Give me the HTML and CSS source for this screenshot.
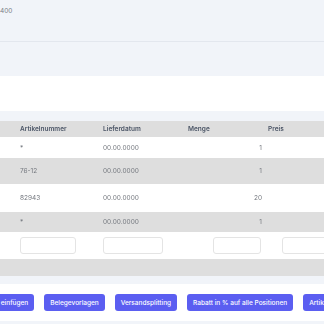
FILE: index.html
```html
<!DOCTYPE html>
<html lang="de">
<head>
  <meta charset="UTF-8">
  <title>Beleg</title>
  <link rel="stylesheet" href="styles.css">
</head>
<body>

  <div class="head-box">
    <span class="phone">400</span>
  </div>
  <div class="sub-box"></div>
  <div class="blank"></div>

  <div class="positions">
    <div class="row head">
      <div class="cell pre"></div>
      <div class="cell nr">Artikelnummer</div>
      <div class="cell date">Lieferdatum</div>
      <div class="cell qty">Menge</div>
      <div class="cell price">Preis</div>
    </div>

    <div class="row r1">
      <div class="cell pre"></div>
      <div class="cell nr">*</div>
      <div class="cell date">00.00.0000</div>
      <div class="cell qty num">1</div>
      <div class="cell price"></div>
    </div>

    <div class="row r2 grey">
      <div class="cell pre"></div>
      <div class="cell nr">76-12</div>
      <div class="cell date">00.00.0000</div>
      <div class="cell qty num">1</div>
      <div class="cell price"></div>
    </div>

    <div class="row r3">
      <div class="cell pre"></div>
      <div class="cell nr">82943</div>
      <div class="cell date">00.00.0000</div>
      <div class="cell qty num">20</div>
      <div class="cell price"></div>
    </div>

    <div class="row r4 grey">
      <div class="cell pre"></div>
      <div class="cell nr">*</div>
      <div class="cell date">00.00.0000</div>
      <div class="cell qty num">1</div>
      <div class="cell price"></div>
    </div>

    <div class="row new">
      <div class="cell pre"></div>
      <div class="cell nr"><input class="inp inp-nr" type="text"></div>
      <div class="cell date"><input class="inp inp-date" type="text"></div>
      <div class="cell qty num"><input class="inp inp-qty" type="text"></div>
      <div class="cell price"><input class="inp inp-price" type="text"></div>
    </div>

    <div class="row foot grey"></div>
  </div>

  <div class="actions">
    <button class="act-btn first">Artikel einfügen</button>
    <button class="act-btn">Belegevorlagen</button>
    <button class="act-btn">Versandsplitting</button>
    <button class="act-btn">Rabatt in % auf alle Positionen</button>
    <button class="act-btn">Artikel</button>
  </div>
  <div class="bottom-line"></div>

</body>
</html>
```

FILE: styles.css
```css
html, body {
  margin: 0;
  padding: 0;
  overflow: hidden;
}

body {
  font-family: Inter, 'Noto Sans', sans-serif;
  font-size: 6.5px;
  color: #73777e;
  background: #fff;
  width: 324px;
  -webkit-font-smoothing: antialiased;
}

.head-box {
  height: 42px;
  background: #f1f4f9;
  border-bottom: 1px solid #e3e7ee;
  box-sizing: border-box;
  padding-top: 7px;
}

.phone {
  color: #7a7f88;
  font-size: 6.5px;
}

.sub-box {
  height: 34px;
  background: #f1f4f9;
}

.blank {
  height: 35px;
  background: #fff;
}

.positions {
  background: #f1f4f9;
  padding-top: 10px;
  will-change: transform;
}

.row {
  display: grid;
  grid-template-columns: 12px 83px 80px 90px 59px;
  align-items: center;
  background: #fff;
}

.row.grey {
  background: #dedede;
}

.row.head {
  height: 16px;
  background: #dedede;
  font-weight: 600;
  color: #4b5566;
}

.r1 { height: 21px; }
.r2 { height: 26px; }
.r3 { height: 28px; }
.r4 { height: 20px; }
.new { height: 27px; }
.foot { height: 17px; }

.cell.nr,
.cell.date {
  padding-left: 8px;
}

.head .qty {
  padding-left: 13px;
}

.head .price {
  padding-left: 3px;
}

.cell.num {
  text-align: right;
  padding-right: 3px;
}

.inp {
  display: block;
  height: 17px;
  box-sizing: border-box;
  border: 1px solid #e4e4e4;
  border-radius: 3px;
  background: #fff;
  padding: 0;
}

.inp-nr { width: 56px; }
.inp-date { width: 60px; }
.inp-qty {
  width: 48px;
  margin-left: auto;
  margin-right: 1px;
}
.inp-price {
  width: 60px;
  margin-left: 17px;
}

.actions {
  display: flex;
  gap: 10px;
  white-space: nowrap;
  background: #fff;
  border-top: 8px solid #f1f4f9;
  padding: 10px 0;
  margin-left: -27px;
}

.act-btn {
  flex: none;
  height: 17px;
  padding: 0 6px;
  border: none;
  border-radius: 3px;
  background: #5b5ef1;
  color: #fff;
  font-family: Inter, 'Noto Sans', sans-serif;
  font-size: 6.5px;
  font-weight: 500;
}

.bottom-line {
  height: 3px;
  background: #f1f4f9;
}
```
